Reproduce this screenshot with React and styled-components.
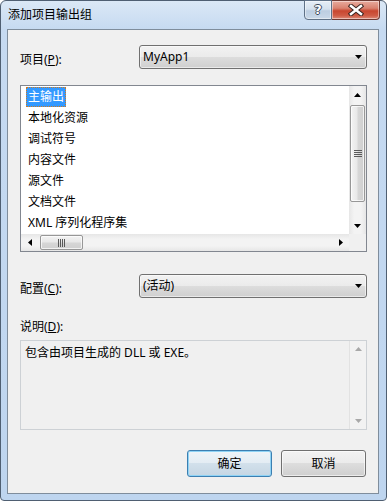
import styled, { createGlobalStyle } from 'styled-components'

const Global = createGlobalStyle`
  html, body { margin: 0; padding: 0; background: #ffffff; }
  body {
    font-family: "Noto Sans", "Noto Sans CJK SC", sans-serif;
    font-size: 12px;
    color: #000;
  }
  * { box-sizing: border-box; }
`

const Window = styled.div`
  width: 387px;
  height: 501px;
  border: 1px solid #4f5f72;
  border-radius: 6px 6px 4px 4px;
  background: linear-gradient(#dbe8f6, #c6daf1 28px, #bed5ef);
  padding: 0 7px 6px 6px;
  display: flex;
  flex-direction: column;
`

const TitleBar = styled.div`
  height: 28px;
  display: flex;
  justify-content: space-between;
  align-items: flex-start;
  padding-left: 1px;
`

const Title = styled.div`
  padding-top: 6px;
  line-height: 16px;
`

const CaptionGroup = styled.div`
  display: flex;
  margin-top: -1px;
  margin-right: -1px;
`

const CaptionButton = styled.div`
  width: ${p => p.$w}px;
  height: 20px;
  display: flex;
  align-items: center;
  justify-content: center;
  border: 1px solid ${p => (p.$close ? '#6e3a33' : '#5f7187')};
  border-left-width: ${p => (p.$close ? 0 : 1)}px;
  border-radius: ${p => (p.$close ? '0 0 4px 0' : '0 0 0 4px')};
  background: ${p =>
    p.$close
      ? 'linear-gradient(#e8ab9e, #d98270 40%, #c8462f 55%, #cf5a43 80%, #dc8a78)'
      : 'linear-gradient(#e6eef7, #d5e1ee 45%, #bccde1 55%, #c9d8e8)'};
  box-shadow: inset 0 0 0 1px rgba(255, 255, 255, 0.45);
`

const Help = styled.span`
  font-family: "DejaVu Sans", sans-serif;
  font-weight: bold;
  font-size: 13px;
  line-height: 14px;
  color: #fff;
  text-shadow: 1px 0 0 #3c4a5c, -1px 0 0 #3c4a5c, 0 1px 0 #3c4a5c, 0 -1px 0 #3c4a5c;
`

const Client = styled.div`
  flex: 1;
  border: 1px solid #7f8d9c;
  background: #f0f0f0;
  padding: 15px 11px 0 12px;
  display: flex;
  flex-direction: column;
`

const FieldRow = styled.div`
  display: flex;
  align-items: center;
  height: 24px;
  margin-top: ${p => p.$top || 0}px;
`

const Label = styled.div`
  width: 119px;
  padding-top: 6px;
  line-height: 16px;
  margin-top: ${p => p.$top || 0}px;
`

const Combo = styled.div`
  width: 228px;
  height: 24px;
  border: 1px solid #707070;
  border-radius: 3px;
  background: linear-gradient(#f2f2f2, #ebebeb 50%, #dddddd 50%, #cfcfcf);
  box-shadow: inset 0 0 0 1px rgba(255, 255, 255, 0.55);
  display: flex;
  align-items: center;
  justify-content: space-between;
  padding: 0 4px 0 3px;
  line-height: 16px;
`

const ListBox = styled.div`
  margin-top: 16px;
  width: 347px;
  height: 167px;
  border: 1px solid #828790;
  background: #fff;
  display: grid;
  grid-template-columns: 1fr 17px;
  grid-template-rows: 1fr 17px;
`

const Items = styled.div`
  padding: 1px 0 0 5px;
  overflow: hidden;
`

const Item = styled.div`
  height: 21px;
  display: flex;
  align-items: flex-start;
`

const ItemText = styled.span`
  height: 20px;
  line-height: 20px;
  padding: 0 2px;
  white-space: nowrap;
  background: ${p => (p.$selected ? '#3399ff' : 'transparent')};
  color: ${p => (p.$selected ? '#fff' : '#000')};
  outline: ${p => (p.$selected ? '1px dotted #d07a20' : 'none')};
  outline-offset: -1px;
`

const ScrollTrack = styled.div`
  display: flex;
  flex-direction: ${p => (p.$horizontal ? 'row' : 'column')};
  background: ${p =>
    p.$horizontal
      ? 'linear-gradient(#e6e6e6, #f3f3f3 30%, #f3f3f3 70%, #e6e6e6)'
      : 'linear-gradient(90deg, #e6e6e6, #f3f3f3 30%, #f3f3f3 70%, #e6e6e6)'};
`

const ScrollArrow = styled.div`
  width: 17px;
  height: 17px;
  flex: none;
  display: flex;
  align-items: center;
  justify-content: center;
`

const ScrollGap = styled.div`
  flex: none;
  width: ${p => (p.$horizontal ? `${p.$size}px` : '17px')};
  height: ${p => (p.$horizontal ? '17px' : `${p.$size}px`)};
`

const ScrollFill = styled.div`
  flex: 1;
`

const Thumb = styled.div`
  flex: none;
  width: ${p => (p.$horizontal ? `${p.$size}px` : '15px')};
  height: ${p => (p.$horizontal ? '15px' : `${p.$size}px`)};
  margin: ${p => (p.$horizontal ? '1px 0' : '0 1px')};
  border: 1px solid #979797;
  border-radius: 2px;
  background: ${p =>
    p.$horizontal
      ? 'linear-gradient(#f3f3f3, #e8e8e8 45%, #d6d6d6 55%, #cfcfcf)'
      : 'linear-gradient(90deg, #f3f3f3, #e8e8e8 45%, #d6d6d6 55%, #cfcfcf)'};
  box-shadow: inset 0 0 0 1px rgba(255, 255, 255, 0.7);
  display: flex;
  align-items: center;
  justify-content: center;
`

const Corner = styled.div`
  background: #f0f0f0;
`

const DescBox = styled.div`
  margin-top: 5px;
  width: 347px;
  height: 90px;
  border: 1px solid #cdd1d5;
  background: #f0f0f0;
  display: flex;
`

const DescText = styled.div`
  flex: 1;
  padding: 4px 0 0 4px;
  line-height: 16px;
`

const DescScroll = styled.div`
  width: 17px;
  border-left: 1px solid #e2e2e2;
  background: #f2f2f2;
  display: flex;
  flex-direction: column;
  justify-content: space-between;
  padding: 6px 0;
  align-items: center;
`

const ButtonRow = styled.div`
  margin-top: 20px;
  display: flex;
  justify-content: flex-end;
  gap: 9px;
  padding-right: 1px;
`

const Button = styled.div`
  width: 85px;
  height: 27px;
  border: 1px solid ${p => (p.$primary ? '#3c7fb1' : '#707070')};
  border-radius: 3px;
  background: ${p =>
    p.$primary
      ? 'linear-gradient(#eef4f8, #e3ecf3 50%, #d2e0eb 50%, #c5d6e3)'
      : 'linear-gradient(#f2f2f2, #ebebeb 50%, #dddddd 50%, #cfcfcf)'};
  box-shadow: inset 0 0 0 1px ${p => (p.$primary ? '#8fd3f5' : 'rgba(255,255,255,0.6)')};
  display: flex;
  align-items: center;
  justify-content: center;
  line-height: 16px;
`

const Arrow = ({ dir = 'down', color = '#000' }) => {
  const shapes = {
    down: 'M0 0 L7 0 L3.5 4 Z',
    up: 'M0 4 L7 4 L3.5 0 Z',
    left: 'M4 0 L4 7 L0 3.5 Z',
    right: 'M0 0 L0 7 L4 3.5 Z',
  }
  const vertical = dir === 'up' || dir === 'down'
  return (
    <svg width={vertical ? 7 : 4} height={vertical ? 4 : 7} viewBox={vertical ? '0 0 7 4' : '0 0 4 7'}>
      <path d={shapes[dir]} fill={color} />
    </svg>
  )
}

const Grip = ({ horizontal }) => (
  <svg width={horizontal ? 7 : 8} height={horizontal ? 8 : 7}>
    {[0, 2, 4, 6].map(o =>
      horizontal ? (
        <rect key={o} x={o} y={0} width={1} height={8} fill="#5a5a5a" />
      ) : (
        <rect key={o} x={0} y={o} width={8} height={1} fill="#5a5a5a" />
      )
    )}
  </svg>
)

const CloseGlyph = () => (
  <svg width="16" height="12" viewBox="0 0 16 12">
    <path d="M3 2 L13 10 M13 2 L3 10" stroke="#3a2420" strokeWidth="4.5" strokeLinecap="square" />
    <path d="M3 2 L13 10 M13 2 L3 10" stroke="#ffffff" strokeWidth="2.5" strokeLinecap="square" />
  </svg>
)

const items = ['主输出', '本地化资源', '调试符号', '内容文件', '源文件', '文档文件', 'XML 序列化程序集']

const App = () => {
  return (
    <>
      <Global />
      <Window>
        <TitleBar>
          <Title>添加项目输出组</Title>
          <CaptionGroup>
            <CaptionButton $w={28}>
              <Help>?</Help>
            </CaptionButton>
            <CaptionButton $w={48} $close>
              <CloseGlyph />
            </CaptionButton>
          </CaptionGroup>
        </TitleBar>
        <Client>
          <FieldRow>
            <Label>项目(<u>P</u>):</Label>
            <Combo>
              <span>MyApp1</span>
              <Arrow dir="down" />
            </Combo>
          </FieldRow>

          <ListBox>
            <Items>
              {items.map((text, i) => (
                <Item key={text}>
                  <ItemText $selected={i === 0}>{text}</ItemText>
                </Item>
              ))}
            </Items>
            <ScrollTrack>
              <ScrollArrow>
                <Arrow dir="up" />
              </ScrollArrow>
              <ScrollGap $size={2} />
              <Thumb $size={97}>
                <Grip />
              </Thumb>
              <ScrollFill />
              <ScrollArrow>
                <Arrow dir="down" />
              </ScrollArrow>
            </ScrollTrack>
            <ScrollTrack $horizontal>
              <ScrollArrow>
                <Arrow dir="left" />
              </ScrollArrow>
              <ScrollGap $horizontal $size={2} />
              <Thumb $horizontal $size={43}>
                <Grip horizontal />
              </Thumb>
              <ScrollFill />
              <ScrollArrow>
                <Arrow dir="right" />
              </ScrollArrow>
            </ScrollTrack>
            <Corner />
          </ListBox>

          <FieldRow $top={22}>
            <Label>配置(<u>C</u>):</Label>
            <Combo>
              <span>(活动)</span>
              <Arrow dir="down" />
            </Combo>
          </FieldRow>

          <Label $top={15}>说明(<u>D</u>):</Label>
          <DescBox>
            <DescText>包含由项目生成的 DLL 或 EXE。</DescText>
            <DescScroll>
              <Arrow dir="up" color="#a8a8a8" />
              <Arrow dir="down" color="#a8a8a8" />
            </DescScroll>
          </DescBox>

          <ButtonRow>
            <Button $primary>确定</Button>
            <Button>取消</Button>
          </ButtonRow>
        </Client>
      </Window>
    </>
  )
}

export default App
